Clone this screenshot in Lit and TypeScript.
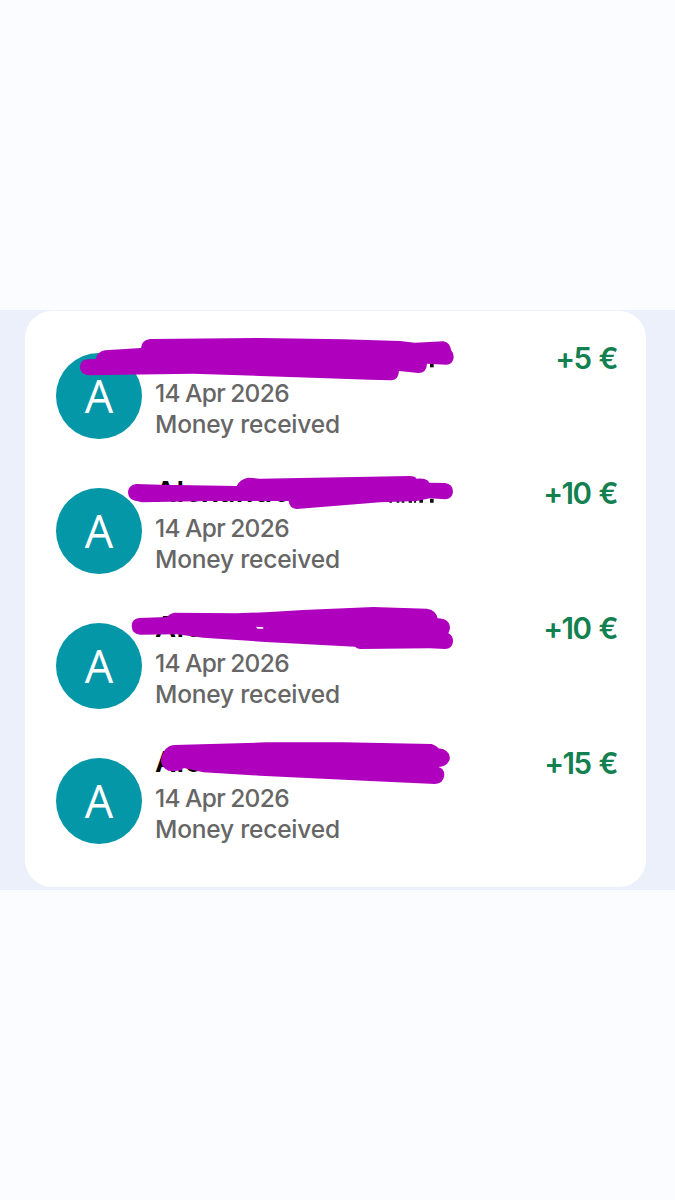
import { LitElement, html, css, svg } from "lit";
import { customElement, property } from "lit/decorators.js";

interface Transfer {
  amount: string;
  stroke: string;
  kind: "first" | "second" | "third" | "fourth";
}

const TRANSFERS: Transfer[] = [
  {
    amount: "+5 €",
    kind: "first",
    stroke:
      "M112,88 L138,87 Q142,64 165,61 L273,54 Q275,30 300,27 L630,24 L880,28 L1050,33 L1095,38 L1180,34 Q1200,38 1203,60 Q1214,72 1210,88 Q1205,104 1190,104 L1131,101 Q1130,128 1105,129 L1047,123 Q1045,150 1025,151 L960,149 L630,138 L430,131 L115,136 Q90,132 90,112 Q90,90 112,88Z",
  },
  {
    amount: "+10 €",
    kind: "second",
    stroke:
      "M258,57 L330,59 L560,63 Q570,42 595,38 L630,41 L1080,33 Q1095,34 1100,41 Q1130,38 1138,53 L1185,54 Q1209,58 1209,80 Q1207,102 1185,103 L1140,100 L1100,108 L990,112 L740,132 Q718,130 716,108 L480,108 L275,112 Q262,108 255,107 Q234,102 234,81 Q236,60 258,57Z",
  },
  {
    amount: "+10 €",
    kind: "third",
    stroke:
      "M268,54 L350,51 Q360,40 372,38 L560,40 L660,36 L760,30 L970,21 L1130,26 Q1158,30 1163,55 Q1200,56 1200,85 Q1198,95 1195,100 Q1209,105 1209,125 Q1207,146 1185,147 L1140,145 L930,147 Q920,146 915,140 L660,127 L460,113 L380,103 L270,104 Q246,102 245,78 Q246,56 268,54Z",
  },
  {
    amount: "+15 €",
    kind: "fourth",
    stroke:
      "M372,30 L650,22 L880,22 L1145,27 Q1160,32 1165,40 Q1200,44 1200,70 Q1195,94 1165,96 Q1183,100 1183,120 Q1180,146 1155,147 L960,138 L630,122 L460,112 L405,100 Q395,98 395,105 Q375,110 355,107 Q335,98 333,78 Q338,35 372,30Z",
  },
];

@customElement("transfer-row")
export class TransferRow extends LitElement {
  @property({ attribute: false }) item!: Transfer;

  static styles = css`
    :host {
      display: flex;
      position: relative;
      height: 135px;
      box-sizing: border-box;
      padding: 0 29px 0 31px;
      font-family: Inter, "Liberation Sans", sans-serif;
    }
    .avatar {
      flex: none;
      width: 86px;
      height: 86px;
      margin-top: 23px;
      border-radius: 50%;
      background: #0497a7;
      color: #fff;
      font: 500 45px/85px "Open Sans", sans-serif;
      text-align: center;
    }
    .info {
      flex: 1;
      margin-left: 13px;
      padding-top: 11px;
      white-space: nowrap;
    }
    .name {
      height: 37px;
      line-height: 32px;
      font-size: 29px;
      font-weight: 600;
      letter-spacing: 0.5px;
      color: #050505;
    }
    .line {
      height: 31px;
      line-height: 31px;
      font-size: 24.5px;
      font-weight: 450;
      letter-spacing: -0.2px;
      color: #666;
    }
    .date {
      letter-spacing: -0.65px;
      word-spacing: -0.8px;
    }
    .amount {
      margin-top: 10px;
      line-height: 36px;
      font-size: 29.5px;
      font-weight: 600;
      letter-spacing: -1.5px;
      word-spacing: 2px;
      color: #13804f;
    }
    .marker {
      position: absolute;
      left: 25px;
      top: 0;
      width: 430px;
      height: 120px;
    }
  `;

  private traces() {
    switch (this.item.kind) {
      case "first":
        return svg`<path fill="#111" d="M1140,96h11v16h-11z" />`;
      case "second":
        return svg`<path fill="#111" d="M1108,101h11v12h-11zM1140,101h11v12h-11zM1018,106h8v7h-8zM1040,106h8v7h-8zM1055,106h8v7h-8zM1076,106h10v7h-10zM1092,106h6v7h-6z" />`;
      default:
        return null;
    }
  }

  render() {
    const { kind, stroke, amount } = this.item;
    return html`
      <div class="avatar">A</div>
      <div class="info">
        <div class="name">${kind === "first" ? "" : kind === "second" ? "Alexande" : "Ale"}</div>
        <div class="line date">14 Apr 2026</div>
        <div class="line">Money received</div>
      </div>
      <div class="amount">${amount}</div>
      <svg class="marker" viewBox="0 0 1290 360">
        ${this.traces()}
        <path fill="#ae00bd" d=${stroke} />
        ${kind === "third" ? svg`<path fill="#fff" d="M618,80L640,82L640,86L622,86Z" />` : null}
      </svg>
    `;
  }
}

@customElement("app-root")
export class AppRoot extends LitElement {
  static styles = css`
    :host {
      display: flex;
      flex-direction: column;
      justify-content: flex-start;
      box-sizing: border-box;
      height: 1200px;
      padding-top: 310px;
      background: #fafcff;
    }
    .band {
      box-sizing: border-box;
      height: 580px;
      padding: 1px 29px 3px 25px;
      background: #ebf0fa;
    }
    .card {
      box-sizing: border-box;
      height: 576px;
      padding-top: 19px;
      border-radius: 27px;
      background: #fff;
    }
  `;

  render() {
    return html`
      <div class="band">
        <div class="card">
          ${TRANSFERS.map((t) => html`<transfer-row .item=${t}></transfer-row>`)}
        </div>
      </div>
    `;
  }
}
